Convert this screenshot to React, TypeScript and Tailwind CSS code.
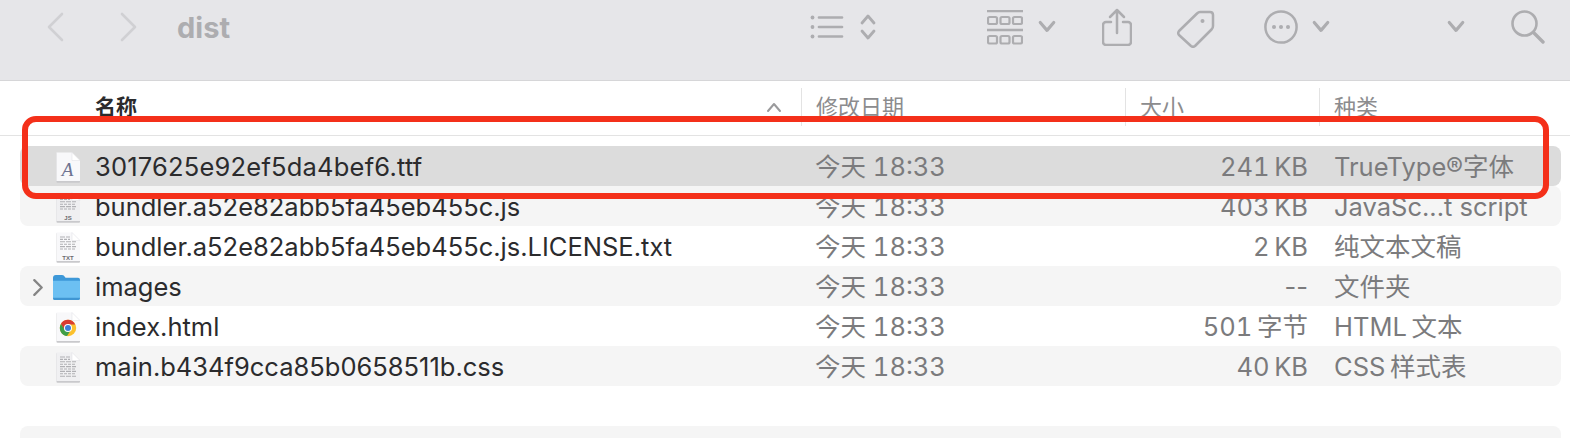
const FONT = "font-['Inter','Noto_Sans_CJK_SC',sans-serif]";

function Chevron({ dir, className, weight }: { dir: 'left' | 'right' | 'up' | 'down'; className?: string; weight?: number }) {
  const d = {
    left: 'M15 2 L2 15 L15 28',
    right: 'M2 2 L15 15 L2 28',
    up: 'M2 12 L8 5 L14 12',
    down: 'M2 4 L8 11 L14 4',
  }[dir];
  const vb = dir === 'left' || dir === 'right' ? '0 0 17 30' : '0 0 16 16';
  return (
    <svg viewBox={vb} className={className} fill="none" stroke="currentColor" strokeWidth={weight ?? 2.8} strokeLinecap="round" strokeLinejoin="round">
      <path d={d} />
    </svg>
  );
}

function ListIcon() {
  return (
    <svg viewBox="0 0 34 24" className="w-[34px] h-[24px] ml-[5px]" fill="none" stroke="currentColor" strokeWidth="2.7" strokeLinecap="round">
      <path d="M9 2.5h23M9 12h23M9 21.5h23" />
      <circle cx="2.5" cy="2.5" r="1.9" fill="currentColor" stroke="none" />
      <circle cx="2.5" cy="12" r="1.9" fill="currentColor" stroke="none" />
      <circle cx="2.5" cy="21.5" r="1.9" fill="currentColor" stroke="none" />
    </svg>
  );
}

function GridIcon() {
  const cells = [0, 12.5, 25];
  return (
    <svg viewBox="0 0 36 35" className="w-[36px] h-[35px]" fill="none" stroke="currentColor" strokeWidth="2.2">
      <path d="M0 1h36M0 20h36" strokeWidth="2.4" />
      {cells.map((x) => (
        <rect key={`a${x}`} x={x + 1} y="7" width="9" height="7" rx="1.5" />
      ))}
      {cells.map((x) => (
        <rect key={`b${x}`} x={x + 1} y="26" width="9" height="7.5" rx="1.5" />
      ))}
    </svg>
  );
}

function ShareIcon() {
  return (
    <svg viewBox="0 0 30 38" className="w-[30px] h-[38px]" fill="none" stroke="currentColor" strokeWidth="2.5" strokeLinecap="round" strokeLinejoin="round">
      <path d="M9 14H4a3 3 0 0 0-3 3v17a3 3 0 0 0 3 3h22a3 3 0 0 0 3-3V17a3 3 0 0 0-3-3h-5" />
      <path d="M15 25V2M8 9l7-7 7 7" />
    </svg>
  );
}

function TagIcon() {
  return (
    <svg viewBox="0 0 38 38" className="w-[38px] h-[38px]" fill="none" stroke="currentColor" strokeWidth="2.5" strokeLinejoin="round">
      <path d="M23 2 L33 2 Q36 2 36 5 L36 16 Q36 18 34.5 19.5 L18 36 Q16 37.5 14 36 L2 25 Q0.5 23 2 21 L20 3.5 Q21.5 2 23 2 Z" />
      <circle cx="25.5" cy="11" r="2" fill="currentColor" stroke="none" />
    </svg>
  );
}

function MoreIcon() {
  return (
    <svg viewBox="0 0 34 34" className="w-[34px] h-[34px]" fill="none" stroke="currentColor" strokeWidth="2.5">
      <circle cx="17" cy="17" r="15.6" />
      <circle cx="10" cy="17" r="2" fill="currentColor" stroke="none" />
      <circle cx="17" cy="17" r="2" fill="currentColor" stroke="none" />
      <circle cx="24" cy="17" r="2" fill="currentColor" stroke="none" />
    </svg>
  );
}

function SearchIcon() {
  return (
    <svg viewBox="0 0 34 34" className="w-[34px] h-[34px]" fill="none" stroke="currentColor" strokeWidth="2.6" strokeLinecap="round">
      <circle cx="13.5" cy="13.5" r="12" />
      <path d="M22.5 22.5L32 32" strokeWidth="3.4" />
    </svg>
  );
}

function Page({ children, fill = '#f8f8fa' }: { children?: React.ReactNode; fill?: string }) {
  return (
    <svg viewBox="0 0 26 32" className="w-[26px] h-[32px]">
      <path d="M1.5 1.5 H17 L25 9.5 V30 Q25 31 24 31 H2.5 Q1.5 31 1.5 30 Z" fill="#c9c9cc" transform="translate(0 0.7)" />
      <path d="M1.5 1.5 H17 L25 9.5 V30 H1.5 Z" fill={fill} />
      <path d="M17 1.5 V9.5 H25 Z" fill="#ffffff" stroke="#dedee2" strokeWidth="0.5" />
      {children}
    </svg>
  );
}

const TextLines = ({ from, to }: { from: number; to: number }) => {
  const ys: number[] = [];
  for (let y = from; y <= to; y += 2.4) ys.push(y);
  return (
    <>
      {ys.map((y, i) => (
        <path key={y} d={`M5 ${y}H${i < 2 ? 15 : 21}`} stroke="#b0b0b4" strokeWidth="1.1" strokeDasharray={i % 2 ? '3 1' : '5 1'} />
      ))}
    </>
  );
};

function FontFile() {
  return (
    <Page>
      <text x="12.5" y="25" textAnchor="middle" fontSize="19" fontStyle="italic" fill="#6d7391" fontFamily="'Liberation Serif', serif">
        A
      </text>
    </Page>
  );
}

function JsFile() {
  return (
    <Page fill="#efeff1">
      <TextLines from={6} to={19} />
      <text x="13" y="29" textAnchor="middle" fontSize="6" fontWeight="700" fill="#6a6a6e" fontFamily="'Liberation Sans', sans-serif">
        JS
      </text>
    </Page>
  );
}

function TxtFile() {
  return (
    <Page>
      <TextLines from={6} to={19} />
      <text x="13" y="29" textAnchor="middle" fontSize="6" fontWeight="700" fill="#6a6a6e" fontFamily="'Liberation Sans', sans-serif">
        TXT
      </text>
    </Page>
  );
}

function CssFile() {
  return (
    <Page fill="#f0f0f2">
      <TextLines from={6} to={26} />
    </Page>
  );
}

function ChromeFile() {
  return (
    <Page>
      <g transform="translate(13 17)">
        <circle r="8.2" fill="#fbc02d" />
        <path d="M0 -8.2 A8.2 8.2 0 0 0 -7.1 -4.1 L-3.5 2 L0 -3.6 H7.2 A8.2 8.2 0 0 0 0 -8.2Z" fill="#d93b30" />
        <path d="M-7.1 -4.1 A8.2 8.2 0 0 0 -1 8.1 L3.2 1.6 L-3.2 1.8 Z" fill="#3f9e48" />
        <circle r="4" fill="#ffffff" />
        <circle r="3" fill="#3e7fd8" />
      </g>
    </Page>
  );
}

function FolderIcon() {
  return (
    <svg viewBox="0 0 30 28" className="w-[29px] h-[27px]">
      <path d="M1 4 Q1 1 4 1 H10 Q12 1 13 2.5 L14 4 H27 Q29 4 29 6 V25 Q29 27 27 27 H3 Q1 27 1 25 Z" fill="#3d98d8" />
      <path d="M1 7 H29 V25 Q29 26 27.5 26 H2.5 Q1 26 1 25 Z" fill="#6cc0f2" />
      <path d="M1 25 Q1 27 3 27 H27 Q29 27 29 25 V24.5 H1 Z" fill="#3f96d3" />
    </svg>
  );
}

const files = [
  { name: '3017625e92ef5da4bef6.ttf', size: '241\u2009KB', kind: 'TrueType®字体', icon: <FontFile />, nameClass: 'tracking-[0.2px]' },
  { name: 'bundler.a52e82abb5fa45eb455c.js', size: '403\u2009KB', kind: 'JavaSc...t script', icon: <JsFile /> },
  { name: 'bundler.a52e82abb5fa45eb455c.js.LICENSE.txt', size: '2\u2009KB', kind: '纯文本文稿', icon: <TxtFile /> },
  { name: 'images', size: '--', kind: '文件夹', icon: <FolderIcon />, folder: true },
  { name: 'index.html', size: '501\u2009字节', kind: 'HTML\u2009文本', icon: <ChromeFile /> },
  { name: 'main.b434f9cca85b0658511b.css', size: '40\u2009KB', kind: 'CSS\u2009样式表', icon: <CssFile /> },
];

function Row({ file, index }: { file?: (typeof files)[number]; index: number }) {
  const bg = index === 0 ? 'bg-[#dcdcdc]' : index % 2 === 1 ? 'bg-[#f5f5f5]' : 'bg-white';
  return (
    <div className={`h-[40px] mx-[20px] w-[1541px] pt-[2px] rounded-[8px] grid grid-cols-[75px_720px_300px_193px_1fr] items-center text-[25.5px] leading-[38px] ${bg}`}>
      {file && (
        <>
          <div className="relative flex justify-end pr-[14px]">
            {file.folder && <Chevron dir="right" weight={4} className="absolute left-[13px] top-[5px] w-[10px] h-[17px] text-[#858585]" />}
            {file.icon}
          </div>
          <div className={`text-[#2b2b2d] whitespace-nowrap ${file.nameClass ?? ''}`}>{file.name}</div>
          <div className="text-[#7b7b7d] tabular-nums">今天 18:33</div>
          <div className={`text-[#7b7b7d] text-right ${file.folder ? '' : 'tabular-nums'}`}>{file.size}</div>
          <div className="text-[#7b7b7d] pl-[26px] whitespace-nowrap">{file.kind}</div>
        </>
      )}
    </div>
  );
}

function HeaderCell({ label, className }: { label: string; className: string }) {
  return (
    <div className={`h-[38px] border-l border-[#e3e3e3] pl-[14px] flex items-center text-[#8c8c8e] text-[22px] ${className}`}>
      {label}
    </div>
  );
}

export default function App() {
  return (
    <div className={`relative w-[1570px] h-[438px] bg-white overflow-hidden ${FONT}`}>
      {/* Toolbar */}
      <div className="h-[81px] bg-[#e6e6e9] border-b border-[#d6d6d8] text-[#adadb0]">
        <div className="h-[54px] flex items-center">
          <Chevron dir="left" weight={2.6} className="w-[17px] h-[30px] ml-[47px] text-[#d0d0d3]" />
          <Chevron dir="right" weight={2.6} className="w-[17px] h-[30px] ml-[56px] text-[#d0d0d3]" />
          <div className="ml-[40px] text-[29px] font-bold leading-none">dist</div>
          <div className="ml-[575px]">
            <ListIcon />
          </div>
          <div className="ml-[15px] flex flex-col">
            <Chevron dir="up" className="w-[18px] h-[16px]" />
            <Chevron dir="down" className="w-[18px] h-[16px]" />
          </div>
          <div className="ml-[110px]">
            <GridIcon />
          </div>
          <Chevron dir="down" className="w-[18px] h-[18px] ml-[15px]" />
          <div className="ml-[46px]">
            <ShareIcon />
          </div>
          <div className="ml-[45px] mt-[3px]">
            <TagIcon />
          </div>
          <div className="ml-[49px]">
            <MoreIcon />
          </div>
          <Chevron dir="down" className="w-[18px] h-[18px] ml-[14px]" />
          <Chevron dir="down" className="w-[18px] h-[18px] ml-[117px]" />
          <div className="ml-[46px]">
            <SearchIcon />
          </div>
        </div>
      </div>

      {/* Column headers */}
      <div className="h-[55px] border-b border-[#e3e3e3] flex items-start pt-[7px]">
        <div className="w-[801px] h-[38px] pl-[95px] pr-[19px] flex items-center justify-between">
          <span className="text-[21px] font-semibold text-[#2b2b2d]">名称</span>
          <Chevron dir="up" weight={2} className="w-[16px] h-[16px] text-[#9a9a9c]" />
        </div>
        <HeaderCell label="修改日期" className="w-[324px]" />
        <HeaderCell label="大小" className="w-[194px]" />
        <HeaderCell label="种类" className="flex-1" />
      </div>

      {/* File rows */}
      <div className="pt-[10px]">
        {files.map((file, i) => (
          <Row key={file.name} file={file} index={i} />
        ))}
        <Row index={6} />
        <Row index={7} />
      </div>

      {/* Red annotation around the selected row */}
      <div className="absolute left-[22px] top-[116px] w-[1527px] h-[83px] rounded-[14px] border-[6px] border-[#f4301a]" />
    </div>
  );
}
